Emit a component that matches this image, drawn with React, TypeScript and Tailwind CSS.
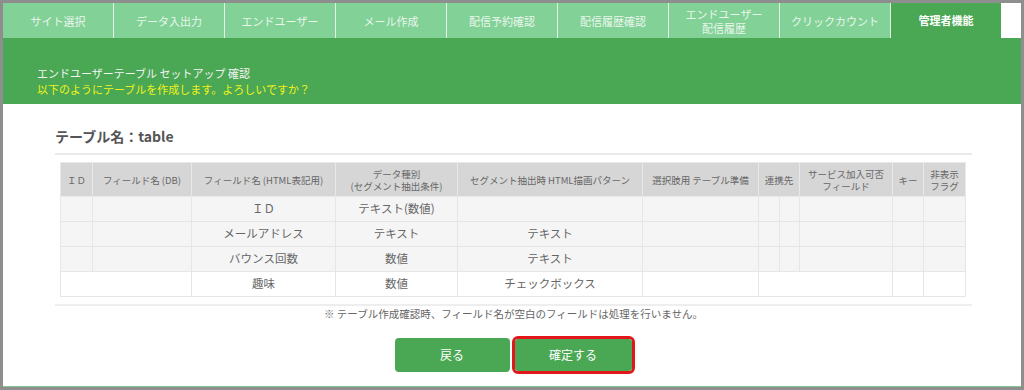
import React from 'react';

const tabs = [
  { label: 'サイト選択' },
  { label: 'データ入出力' },
  { label: 'エンドユーザー' },
  { label: 'メール作成' },
  { label: '配信予約確認' },
  { label: '配信履歴確認' },
  { label: 'エンドユーザー\n配信履歴' },
  { label: 'クリックカウント' },
  { label: '管理者機能', active: true },
];

const rows = [
  { html: 'ＩＤ', type: 'テキスト(数値)', pattern: '' },
  { html: 'メールアドレス', type: 'テキスト', pattern: 'テキスト' },
  { html: 'バウンス回数', type: '数値', pattern: 'テキスト' },
];

const font = { fontFamily: '"Noto Sans CJK JP", "Noto Sans", sans-serif' };

const App: React.FC = () => {
  return (
    <div
      className="w-[1024px] h-[390px] bg-white border-[3px] border-[#8e8e8e] overflow-hidden"
      style={font}
    >
      <div className="flex flex-col h-full border-b border-[#7fc98e]">
        {/* tabs */}
        <div className="flex h-[35px] shrink-0 pr-[20px]">
          {tabs.map((t, i) => (
            <div
              key={i}
              className={
                t.active
                  ? 'w-[110px] flex items-center justify-center bg-[#4aa753] text-white text-[11px] font-bold'
                  : 'w-[111px] flex items-center justify-center bg-[#82d197] text-[#eaf6ec] text-[11px] border-r border-[#e3f4e7] whitespace-pre-line text-center leading-[14px]'
              }
            >
              {t.label}
            </div>
          ))}
        </div>

        {/* header */}
        <div className="bg-[#4aa753] h-[66px] shrink-0 pl-[34px] pt-[27px] text-[11px] leading-[16px]">
          <p className="text-[#f4f4f4]">エンドユーザーテーブル セットアップ 確認</p>
          <p className="text-[#f2f21d]">以下のようにテーブルを作成します。よろしいですか？</p>
        </div>

        {/* content */}
        <div className="pl-[52px] w-[969px] pt-[22px]">
          <h2 className="text-[14px] font-bold text-[#555] leading-[20px]">テーブル名：table</h2>
          <div className="mt-[7px] h-[2px] bg-[#eaeaea]" />
          <div className="px-[5px] pt-[7px]">
            <table className="table-fixed w-[905px] border-collapse text-[#666] text-center">
              <colgroup>
                <col className="w-[32px]" />
                <col className="w-[99px]" />
                <col className="w-[144px]" />
                <col className="w-[122px]" />
                <col className="w-[185px]" />
                <col className="w-[116px]" />
                <col className="w-[21px]" />
                <col className="w-[20px]" />
                <col className="w-[93px]" />
                <col className="w-[31px]" />
                <col className="w-[42px]" />
              </colgroup>
              <thead>
                <tr className="bg-[#d6d6d6] h-[34px] text-[9.5px] leading-[12px]">
                  <th className="font-normal border border-[#e9e9e9]">ＩＤ</th>
                  <th className="font-normal border border-[#e9e9e9]">フィールド名 (DB)</th>
                  <th className="font-normal border border-[#e9e9e9]">フィールド名 (HTML表記用)</th>
                  <th className="font-normal border border-[#e9e9e9]">データ種別<br />(セグメント抽出条件)</th>
                  <th className="font-normal border border-[#e9e9e9]">セグメント抽出時 HTML描画パターン</th>
                  <th className="font-normal border border-[#e9e9e9]">選択肢用 テーブル準備</th>
                  <th colSpan={2} className="font-normal border border-[#e9e9e9]">連携先</th>
                  <th className="font-normal border border-[#e9e9e9]">サービス加入可否<br />フィールド</th>
                  <th className="font-normal border border-[#e9e9e9]">キー</th>
                  <th className="font-normal border border-[#e9e9e9]">非表示<br />フラグ</th>
                </tr>
              </thead>
              <tbody className="text-[11.5px]">
                {rows.map((r, i) => (
                  <tr key={i} className="bg-[#f5f5f5] h-[25px]">
                    <td className="border border-[#e6e6e6]" />
                    <td className="border border-[#e6e6e6]" />
                    <td className="border border-[#e6e6e6]">{r.html}</td>
                    <td className="border border-[#e6e6e6]">{r.type}</td>
                    <td className="border border-[#e6e6e6]">{r.pattern}</td>
                    <td className="border border-[#e6e6e6]" />
                    <td className="border border-[#e6e6e6]" />
                    <td className="border border-[#e6e6e6]" />
                    <td className="border border-[#e6e6e6]" />
                    <td className="border border-[#e6e6e6]" />
                    <td className="border border-[#e6e6e6]" />
                  </tr>
                ))}
                <tr className="bg-white h-[25px]">
                  <td colSpan={2} className="border border-[#e6e6e6]" />
                  <td className="border border-[#e6e6e6]">趣味</td>
                  <td className="border border-[#e6e6e6]">数値</td>
                  <td className="border border-[#e6e6e6]">チェックボックス</td>
                  <td className="border border-[#e6e6e6]" />
                  <td colSpan={3} className="border border-[#e6e6e6]" />
                  <td className="border border-[#e6e6e6]" />
                  <td className="border border-[#e6e6e6]" />
                </tr>
              </tbody>
            </table>
          </div>
          <div className="mt-[7px] h-[2px] bg-[#eeeeee]" />
          <p className="text-center text-[10.5px] text-[#666] mt-[1px] leading-[14px]">
            ※ テーブル作成確認時、フィールド名が空白のフィールドは処理を行いません。
          </p>
          <div className="flex justify-center items-center gap-[2px] mt-[15px] pl-[2px]">
            <button className="w-[115px] h-[34px] rounded-[4px] bg-[#4aa753] text-white text-[12px]">
              戻る
            </button>
            <div className="rounded-[6px] border-[3px] border-[#e3161c] p-0">
              <button className="w-[117px] h-[32px] rounded-[3px] bg-[#4aa753] text-white text-[12px] block">
                確定する
              </button>
            </div>
          </div>
        </div>
      </div>
    </div>
  );
};

export default App;
